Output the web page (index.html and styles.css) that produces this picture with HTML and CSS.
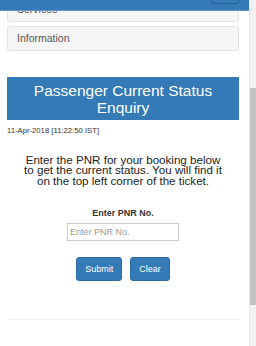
FILE: index.html
```html
<!DOCTYPE html>
<html lang="en">
<head>
  <meta charset="UTF-8">
  <meta name="viewport" content="width=device-width, initial-scale=1.0">
  <title>PNR Status</title>
  <link rel="stylesheet" href="styles.css">
</head>
<body>
  <div class="screen">
    <div class="page">
      <nav class="navbar">
        <button class="navbar-toggle" aria-label="Toggle menu"></button>
      </nav>
      <div class="menu">
        <a class="menu-item" href="#">Services</a>
        <a class="menu-item" href="#">Information</a>
      </div>
      <main class="content">
        <h3 class="title">Passenger Current Status Enquiry</h3>
        <div class="timestamp">11-Apr-2018 [11:22:50 IST]</div>
        <p class="intro">Enter the PNR for your booking below to get the current status. You will find it on the top left corner of the ticket.</p>
        <form class="pnr-form">
          <label for="pnr">Enter PNR No.</label>
          <input id="pnr" type="text" placeholder="Enter PNR No.">
          <div class="actions">
            <button type="button" class="btn">Submit</button>
            <button type="button" class="btn">Clear</button>
          </div>
        </form>
        <hr class="divider">
      </main>
    </div>
    <div class="scrollbar"><div class="thumb"></div></div>
  </div>
</body>
</html>
```

FILE: styles.css
```css
:root {
  --blue: #337ab7;
  --blue-border: #2e6da4;
  --text: #333;
}
body { margin: 0; font-family: "Liberation Sans", Arial, sans-serif; color: var(--text); background: #fff; }
.screen { display: flex; width: 256px; height: 346px; overflow: hidden; }
.page { flex: 1; position: relative; overflow: hidden; }

.navbar { position: absolute; top: 0; left: 0; right: 0; height: 10px; background: var(--blue); border-bottom: 1px solid #5b97cc; display: flex; justify-content: flex-end; padding-right: 10px; z-index: 2; }
.navbar-toggle { width: 28px; height: 14px; margin-top: -10px; background: var(--blue); border: 1px solid #285e8e; border-radius: 3px; padding: 0; }

.menu { display: flex; flex-direction: column; gap: 4px; margin: -3px 10px 0 7px; }
.menu-item { display: block; height: 23px; line-height: 23px; padding-left: 9px; background: #f5f5f5; border: 1px solid #e3e3e3; border-radius: 3px; font-size: 10.5px; color: #555; text-decoration: none; }

.content { padding: 0 10px 0 7px; }
.title { margin: 26px 0 0; padding: 5px 0 3.5px; background: var(--blue); color: #fff; font-weight: normal; font-size: 15.5px; line-height: 17px; text-align: center; }
.timestamp { margin-top: 5.5px; font-size: 7.7px; line-height: 11px; }
.intro { width: 204px; margin: 18.5px auto 0; font-size: 11.6px; line-height: 10.9px; text-align: center; color: #222; }

.pnr-form { display: flex; flex-direction: column; align-items: center; margin-top: 21px; }
.pnr-form label { font-size: 9px; font-weight: bold; line-height: 11px; }
.pnr-form input { box-sizing: border-box; width: 112px; height: 18px; margin-top: 4px; padding: 0 2px; border: 1px solid #ccc; font-family: inherit; font-size: 9px; }
.pnr-form input::placeholder { color: #999; }
.actions { display: flex; gap: 8px; margin-top: 16px; }
.btn { height: 24px; padding: 0 8px; background: var(--blue); border: 1px solid var(--blue-border); border-radius: 3px; color: #fff; font-family: inherit; font-size: 9px; }

.divider { margin: 38px 0 0 1px; border: 0; border-top: 1px solid #eee; }

.scrollbar { width: 7px; background: #f1f1f1; border-left: 1px solid #e8e8e8; box-sizing: border-box; }
.thumb { margin-top: 88px; height: 217px; background: #c1c1c1; }
```
